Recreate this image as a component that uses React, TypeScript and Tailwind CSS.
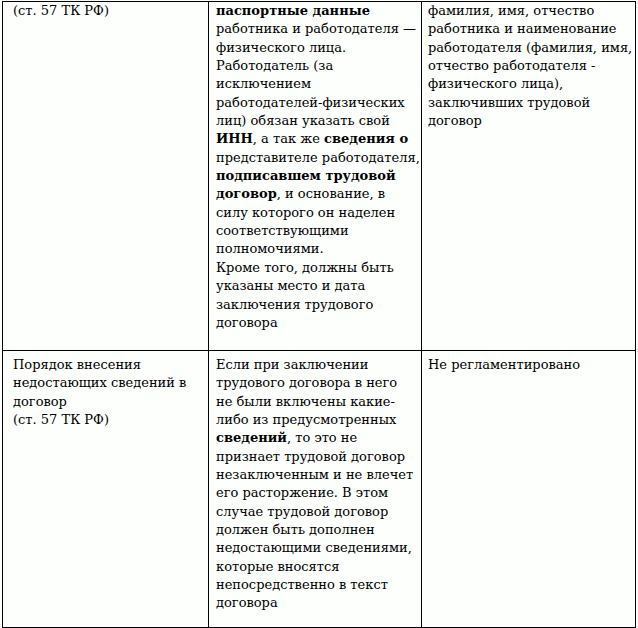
export default function App() {
  const cell =
    "border border-black align-top pr-[2px] text-[13px] leading-[18.35px] text-black whitespace-nowrap font-['DejaVu_Serif']";
  return (
    <div className="bg-[#fdfffd] w-[638px] h-[628px] overflow-hidden pl-[2px] pt-[1px] font-['DejaVu_Serif']">
      <table className="table-fixed border-collapse w-[633px]">
        <colgroup>
          <col className="w-[206px]" />
          <col className="w-[213px]" />
          <col className="w-[214px]" />
        </colgroup>
        <tbody>
          <tr className="h-[349px]">
            <td className={`${cell} pt-0 pl-[10px]`}>(ст. 57 ТК РФ)</td>
            <td className={`${cell} pt-0 pl-[7px]`}>
              <b>паспортные данные</b>
              <br />
              работника и работодателя —<br />
              физического лица.
              <br />
              Работодатель (за
              <br />
              исключением
              <br />
              работодателей-физических
              <br />
              лиц) обязан указать свой
              <br />
              <b>ИНН</b>, а так же <b>сведения о</b>
              <br />
              представителе работодателя,
              <br />
              <b>подписавшем трудовой</b>
              <br />
              <b>договор</b>, и основание, в<br />
              силу которого он наделен
              <br />
              соответствующими
              <br />
              полномочиями.
              <br />
              Кроме того, должны быть
              <br />
              указаны место и дата
              <br />
              заключения трудового
              <br />
              договора
            </td>
            <td className={`${cell} pt-0 pl-[6px]`}>
              фамилия, имя, отчество
              <br />
              работника и наименование
              <br />
              работодателя (фамилия, имя,
              <br />
              отчество работодателя -<br />
              физического лица),
              <br />
              заключивших трудовой
              <br />
              договор
            </td>
          </tr>
          <tr className="h-[277px]">
            <td className={`${cell} pt-[5px] pl-[10px]`}>
              Порядок внесения
              <br />
              недостающих сведений в<br />
              договор
              <br />
              (ст. 57 ТК РФ)
            </td>
            <td className={`${cell} pt-[5px] pl-[7px]`}>
              Если при заключении
              <br />
              трудового договора в него
              <br />
              не были включены какие-
              <br />
              либо из предусмотренных
              <br />
              <b>сведений</b>, то это не
              <br />
              признает трудовой договор
              <br />
              незаключенным и не влечет
              <br />
              его расторжение. В этом
              <br />
              случае трудовой договор
              <br />
              должен быть дополнен
              <br />
              недостающими сведениями,
              <br />
              которые вносятся
              <br />
              непосредственно в текст
              <br />
              договора
            </td>
            <td className={`${cell} pt-[5px] pl-[6px]`}>Не регламентировано</td>
          </tr>
        </tbody>
      </table>
    </div>
  );
}
